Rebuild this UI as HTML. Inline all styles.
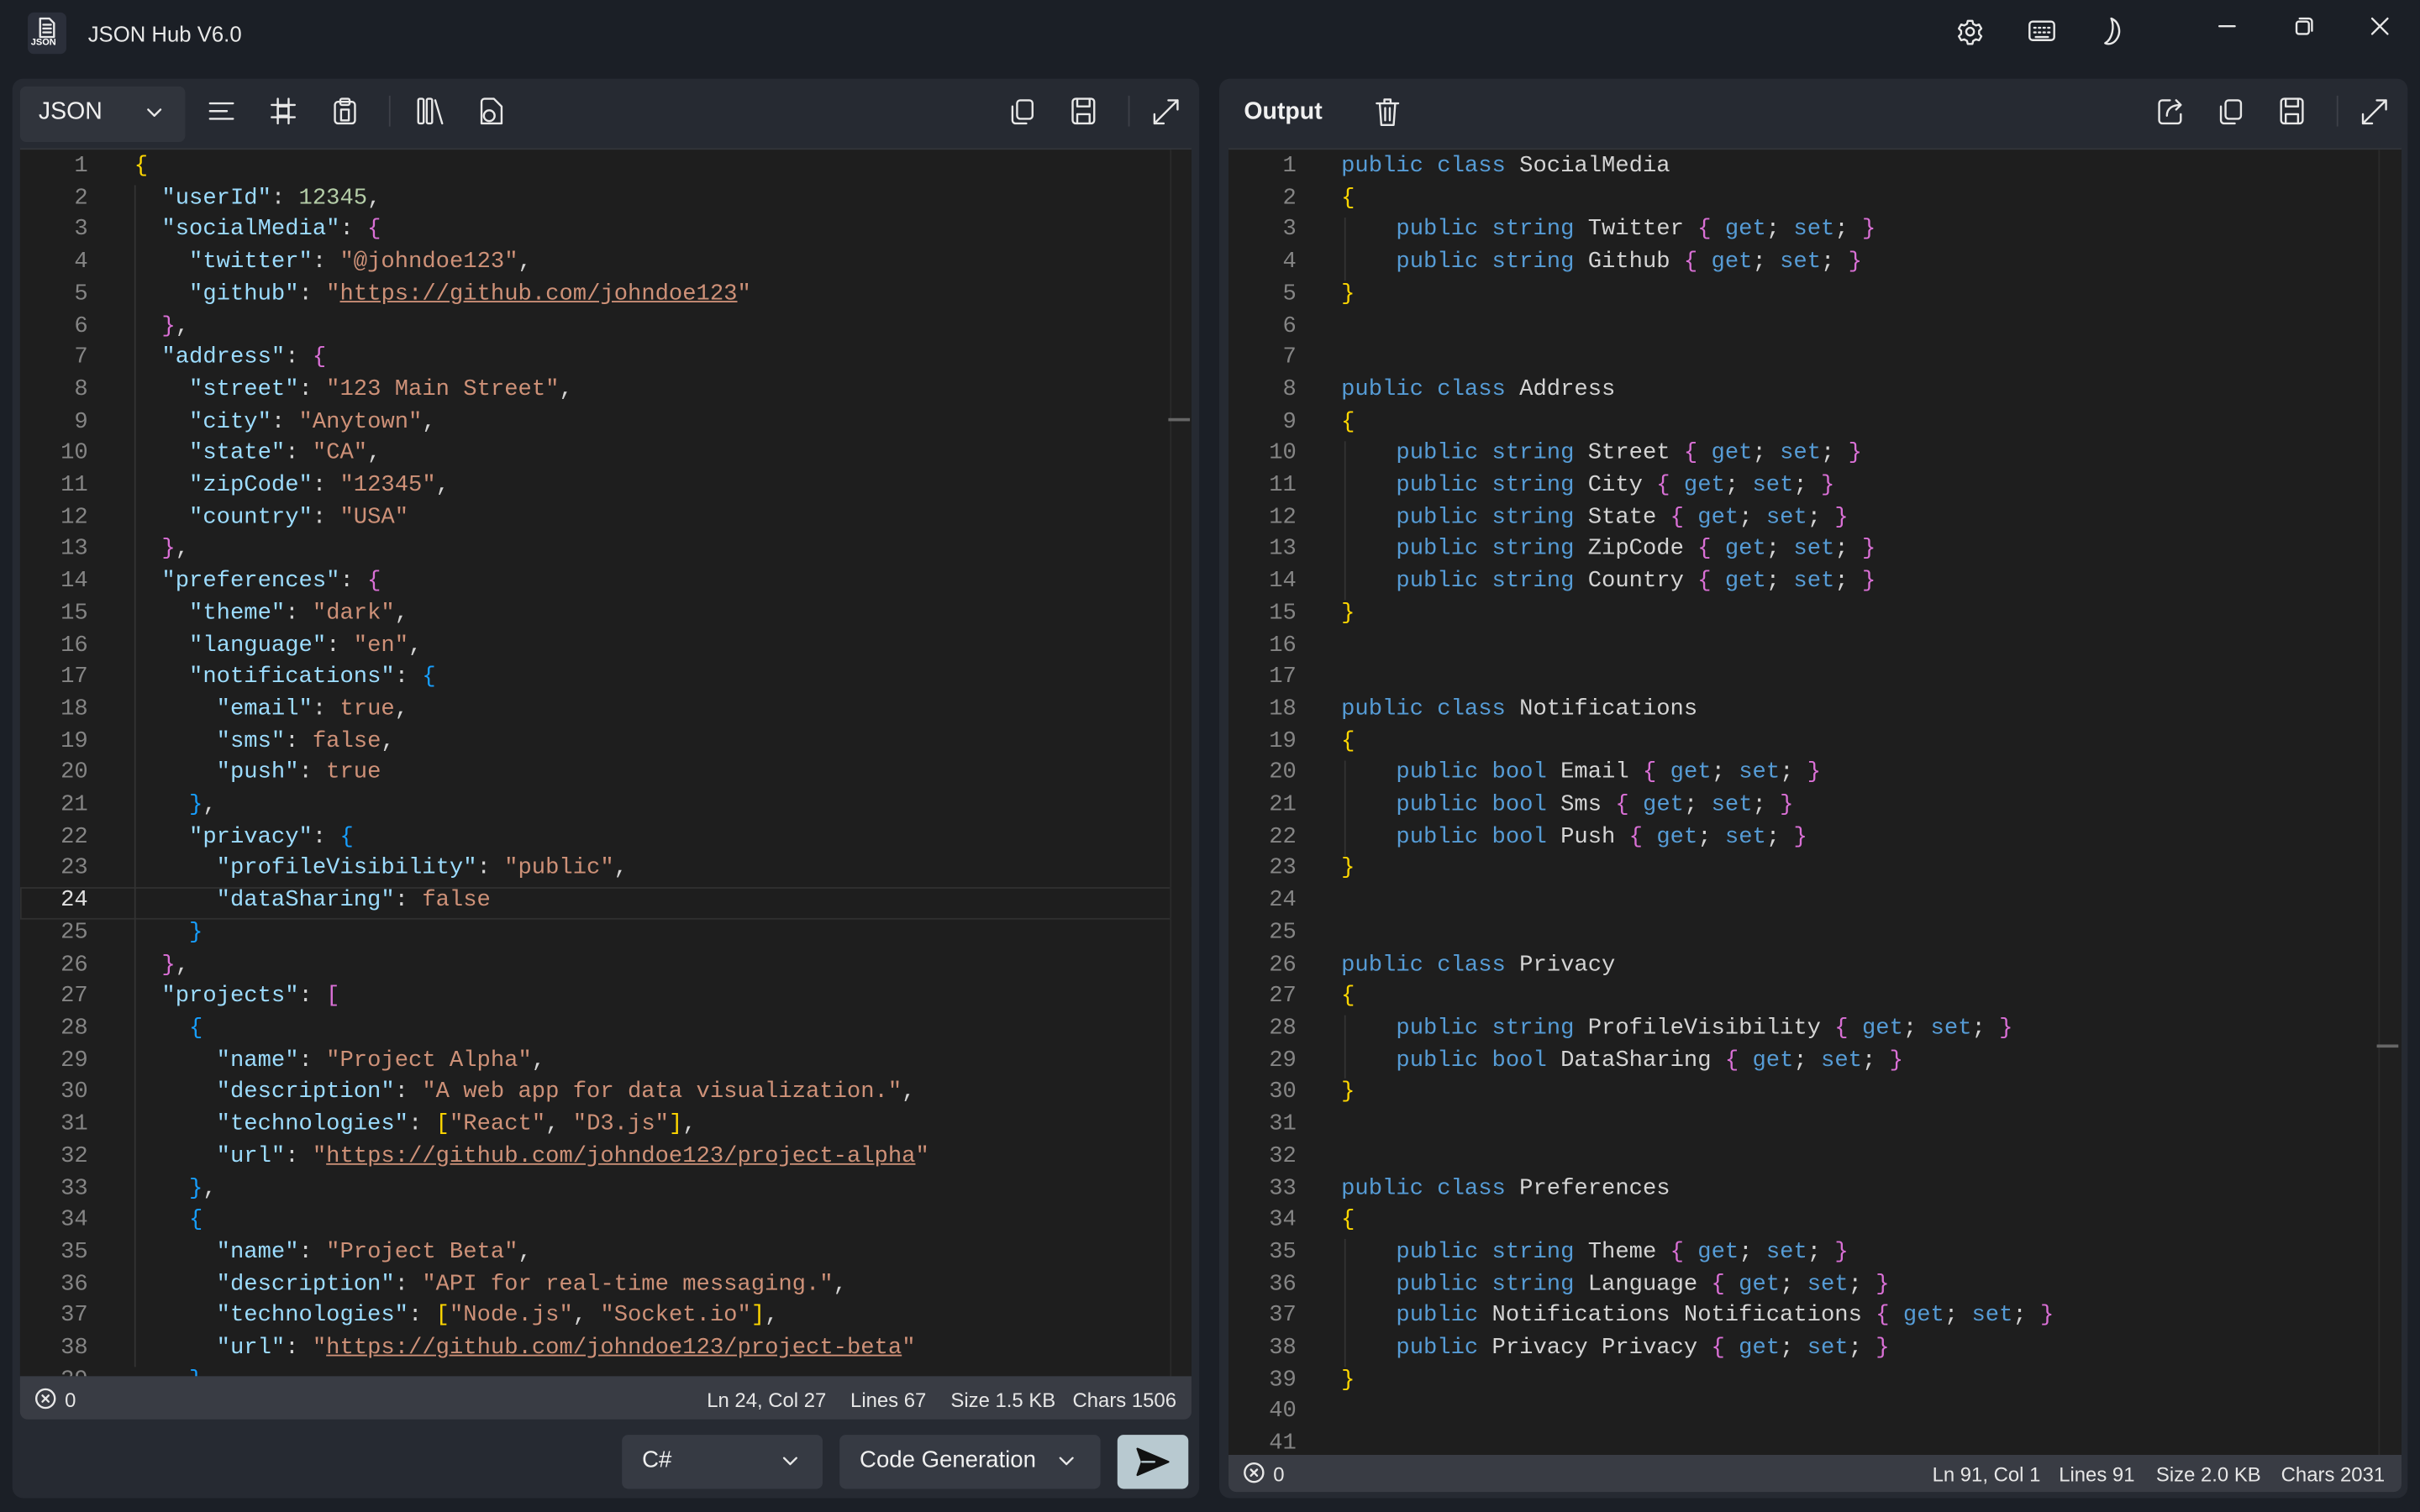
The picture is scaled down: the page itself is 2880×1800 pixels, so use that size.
<!DOCTYPE html>
<html><head><meta charset="utf-8">
<style>
*{margin:0;padding:0;box-sizing:border-box}
html,body{width:2880px;height:1800px;overflow:hidden;background:#1b1f26}
#app{position:absolute;left:0;top:0;width:1568px;height:980px;transform:scale(1.83673);transform-origin:0 0;background:#1b1f26;font-family:"Liberation Sans",sans-serif;color:#e6e6e6}
.abs{position:absolute}
.panel{position:absolute;background:#262a32;border-radius:7px}
.ed{position:absolute;background:#1e1e1e;overflow:hidden;border-top:1px solid #33363c}
.code{position:absolute;top:1px;font-family:"Liberation Mono",monospace;font-size:14.8px;line-height:20.7px;white-space:pre;color:#d4d4d4}
.ln{position:absolute;top:1px;font-family:"Liberation Mono",monospace;font-size:14.8px;line-height:20.7px;text-align:right;color:#858585;white-space:pre}
.k{color:#9cdcfe}.s{color:#ce9178}.n{color:#b5cea8}.u{color:#ce9178;text-decoration:underline}
.y{color:#ffd700}.p{color:#da70d6}.b{color:#179fff}
.kw{color:#569cd6}
.status{position:absolute;background:#393c44;font-size:13px;color:#e6e6e6}
.btn{position:absolute;background:#363a43;border-radius:4px;font-size:15px;color:#f0f0f0}
svg{position:absolute;overflow:visible}
svg *{fill:none;stroke:#e8e8e8;stroke-width:1.3;stroke-linecap:round;stroke-linejoin:round}
</style></head><body><div id="app">

<!-- title bar -->
<div class="abs" style="left:18px;top:8px;width:25px;height:27px;background:#2b2f3a;border-radius:4px"></div>
<svg style="left:24px;top:11px" width="14" height="14" viewBox="0 0 14 14"><path d="M2 1h6l3 3v9H2z M4 5h5 M4 7.5h5 M4 10h5" stroke-width="1"/></svg>
<div class="abs" style="left:20px;top:25px;font-size:6px;font-weight:bold;color:#fff">JSON</div>
<div class="abs" style="left:57px;top:14px;font-size:14px;color:#e8e8e8">JSON Hub V6.0</div>
<svg style="left:1268px;top:12px" width="17" height="17" viewBox="0 0 17 17"><circle cx="8.5" cy="8.5" r="2.5"/><path d="M7 1.5h3l.5 2 1.8 1 2-.6 1.5 2.6-1.5 1.5v2l1.5 1.5-1.5 2.6-2-.6-1.8 1-.5 2H7l-.5-2-1.8-1-2 .6-1.5-2.6 1.5-1.5v-2L1.2 6.5l1.5-2.6 2 .6 1.8-1z"/></svg>
<svg style="left:1314px;top:13px" width="18" height="15" viewBox="0 0 18 15"><rect x="1" y="1" width="16" height="12" rx="2"/><path d="M4 5h1M7 5h1M10 5h1M13 5h1M4 8h1M7 8h1M10 8h1M13 8h1M5 11h8"/></svg>
<svg style="left:1362px;top:11px" width="16" height="19" viewBox="0 0 16 19"><path d="M6 1c5 2 7 9 3 14-2 2.5-5 3-7 2 5-3 6-11 4-16z"/></svg>
<svg style="left:1437px;top:16px" width="12" height="2" viewBox="0 0 12 2"><path d="M1 1h10"/></svg>
<svg style="left:1487px;top:11px" width="12" height="12" viewBox="0 0 12 12"><rect x="1" y="3" width="8" height="8" rx="1.5"/><path d="M3 1h6a2 2 0 0 1 2 2v6"/></svg>
<svg style="left:1536px;top:11px" width="12" height="12" viewBox="0 0 12 12"><path d="M1 1l10 10M11 1L1 11"/></svg>

<!-- LEFT PANEL -->
<div class="panel" style="left:8px;top:51px;width:769px;height:920px"></div>
<div class="btn" style="left:13px;top:56px;width:107px;height:36px;background:#30343c"><span class="abs" style="left:12px;top:8px;font-size:15.5px">JSON</span>
<svg style="left:82px;top:14px" width="10" height="6" viewBox="0 0 10 6"><path d="M1 1l4 4 4-4"/></svg></div>
<svg style="left:135px;top:65px" width="17" height="14" viewBox="0 0 17 14"><path d="M1 2h15M1 7h11M1 12h15"/></svg>
<svg style="left:175px;top:63px" width="17" height="18" viewBox="0 0 17 18"><path d="M5 1v16M12 1v16M1 5h15M1 13h15"/><rect x="5" y="6" width="7" height="6"/></svg>
<svg style="left:216px;top:63px" width="15" height="18" viewBox="0 0 15 18"><rect x="1" y="3" width="13" height="14" rx="2"/><rect x="4.5" y="1" width="6" height="4" rx="1"/><path d="M5 8h5v7H5z"/></svg>
<div class="abs" style="left:252px;top:62px;width:1px;height:20px;background:#3d4048"></div>
<svg style="left:270px;top:63px" width="18" height="18" viewBox="0 0 18 18"><rect x="1" y="1" width="3.5" height="16" rx="1"/><rect x="6.5" y="1" width="3.5" height="16" rx="1"/><path d="M12 2l4.5 15"/></svg>
<svg style="left:310px;top:63px" width="16" height="18" viewBox="0 0 16 18"><path d="M2 17V3a2 2 0 0 1 2-2h6l5 5v11z"/><circle cx="7" cy="12" r="3.5" fill="#e8e8e8"/></svg>
<svg style="left:654px;top:64px" width="16" height="17" viewBox="0 0 16 17"><rect x="5" y="1" width="10" height="12" rx="2"/><path d="M2 5v9a2 2 0 0 0 2 2h7"/></svg>
<svg style="left:694px;top:63px" width="16" height="18" viewBox="0 0 16 18"><rect x="1" y="1" width="14" height="16" rx="2"/><path d="M4 1v5h8V1M4 17v-6h8v6"/></svg>
<div class="abs" style="left:731px;top:62px;width:1px;height:20px;background:#3d4048"></div>
<svg style="left:747px;top:64px" width="17" height="17" viewBox="0 0 17 17"><path d="M10 1h6v6M16 1L1 16M1 10v6h6"/></svg>

<div class="ed" style="left:13px;top:96px;width:759px;height:796px">
<div class="abs" style="left:0;top:478px;width:759px;height:21px;border:1px solid #303030"></div>
<div class="abs" style="left:745px;top:0;width:14px;height:796px;background:#1f1f1f;border-left:1px solid #2a2a2a"></div>
<div class="abs" style="left:744px;top:174px;width:14px;height:2px;background:#666"></div>
<div class="abs" style="left:74px;top:23px;width:1px;height:766px;background:#333"></div>
<div class="ln" style="left:0;width:44px">1
2
3
4
5
6
7
8
9
10
11
12
13
14
15
16
17
18
19
20
21
22
23
<span style="color:#e0e0e0">24</span>
25
26
27
28
29
30
31
32
33
34
35
36
37
38
39</div>
<div class="code" style="left:74px"><span class="y">{</span>
  <span class="k">"userId"</span>: <span class="n">12345</span>,
  <span class="k">"socialMedia"</span>: <span class="p">{</span>
    <span class="k">"twitter"</span>: <span class="s">"@johndoe123"</span>,
    <span class="k">"github"</span>: <span class="s">"<span class="u">https://github.com/johndoe123</span>"</span>
  <span class="p">}</span>,
  <span class="k">"address"</span>: <span class="p">{</span>
    <span class="k">"street"</span>: <span class="s">"123 Main Street"</span>,
    <span class="k">"city"</span>: <span class="s">"Anytown"</span>,
    <span class="k">"state"</span>: <span class="s">"CA"</span>,
    <span class="k">"zipCode"</span>: <span class="s">"12345"</span>,
    <span class="k">"country"</span>: <span class="s">"USA"</span>
  <span class="p">}</span>,
  <span class="k">"preferences"</span>: <span class="p">{</span>
    <span class="k">"theme"</span>: <span class="s">"dark"</span>,
    <span class="k">"language"</span>: <span class="s">"en"</span>,
    <span class="k">"notifications"</span>: <span class="b">{</span>
      <span class="k">"email"</span>: <span class="s">true</span>,
      <span class="k">"sms"</span>: <span class="s">false</span>,
      <span class="k">"push"</span>: <span class="s">true</span>
    <span class="b">}</span>,
    <span class="k">"privacy"</span>: <span class="b">{</span>
      <span class="k">"profileVisibility"</span>: <span class="s">"public"</span>,
      <span class="k">"dataSharing"</span>: <span class="s">false</span>
    <span class="b">}</span>
  <span class="p">}</span>,
  <span class="k">"projects"</span>: <span class="p">[</span>
    <span class="b">{</span>
      <span class="k">"name"</span>: <span class="s">"Project Alpha"</span>,
      <span class="k">"description"</span>: <span class="s">"A web app for data visualization."</span>,
      <span class="k">"technologies"</span>: <span class="y">[</span><span class="s">"React"</span>, <span class="s">"D3.js"</span><span class="y">]</span>,
      <span class="k">"url"</span>: <span class="s">"<span class="u">https://github.com/johndoe123/project-alpha</span>"</span>
    <span class="b">}</span>,
    <span class="b">{</span>
      <span class="k">"name"</span>: <span class="s">"Project Beta"</span>,
      <span class="k">"description"</span>: <span class="s">"API for real-time messaging."</span>,
      <span class="k">"technologies"</span>: <span class="y">[</span><span class="s">"Node.js"</span>, <span class="s">"Socket.io"</span><span class="y">]</span>,
      <span class="k">"url"</span>: <span class="s">"<span class="u">https://github.com/johndoe123/project-beta</span>"</span>
    <span class="b">}</span></div>
</div>
<div class="status" style="left:13px;top:892px;width:759px;height:28px;border-radius:0 0 5px 5px">
<svg style="left:10px;top:8px" width="13" height="13" viewBox="0 0 13 13"><circle cx="6.5" cy="6.5" r="6"/><path d="M4.5 4.5l4 4M8.5 4.5l-4 4"/></svg>
<span class="abs" style="left:29px;top:8px">0</span>
<span class="abs" style="left:445px;top:8px">Ln 24, Col 27</span>
<span class="abs" style="left:538px;top:8px">Lines 67</span>
<span class="abs" style="left:603px;top:8px">Size 1.5 KB</span>
<span class="abs" style="left:682px;top:8px">Chars 1506</span>
</div>
<div class="btn" style="left:403px;top:930px;width:130px;height:35px"><span class="abs" style="left:13px;top:8px">C#</span>
<svg style="left:104px;top:14px" width="10" height="6" viewBox="0 0 10 6"><path d="M1 1l4 4 4-4"/></svg></div>
<div class="btn" style="left:544px;top:930px;width:169px;height:35px"><span class="abs" style="left:13px;top:8px">Code Generation</span>
<svg style="left:142px;top:14px" width="10" height="6" viewBox="0 0 10 6"><path d="M1 1l4 4 4-4"/></svg></div>
<div class="btn" style="left:724px;top:930px;width:46px;height:35px;background:#b8c9d0">
<svg style="left:12px;top:8px" width="22" height="19" viewBox="0 0 22 19"><path d="M1 1l20 8.5L1 18l3-8.5z" style="fill:#111;stroke:#111"/><path d="M4 9.5h8" style="stroke:#b8c9d0"/></svg></div>

<!-- RIGHT PANEL -->
<div class="panel" style="left:790px;top:51px;width:770px;height:920px"></div>
<div class="abs" style="left:806px;top:64px;font-size:15.5px;font-weight:bold;color:#f0f0f0">Output</div>
<svg style="left:891px;top:63px" width="16" height="19" viewBox="0 0 16 19"><path d="M1 4h14M6 4V1.5h4V4M3 4l1 14h8l1-14M6.5 7v8M9.5 7v8"/></svg>
<svg style="left:1398px;top:63px" width="17" height="18" viewBox="0 0 17 18"><path d="M8 2H3a2 2 0 0 0-2 2v11a2 2 0 0 0 2 2h10a2 2 0 0 0 2-2v-4"/><path d="M6 12c0-5 4-7 9-7M12 2l3 3-3 3"/></svg>
<svg style="left:1437px;top:64px" width="16" height="17" viewBox="0 0 16 17"><rect x="5" y="1" width="10" height="12" rx="2"/><path d="M2 5v9a2 2 0 0 0 2 2h7"/></svg>
<svg style="left:1477px;top:63px" width="16" height="18" viewBox="0 0 16 18"><rect x="1" y="1" width="14" height="16" rx="2"/><path d="M4 1v5h8V1M4 17v-6h8v6"/></svg>
<div class="abs" style="left:1514px;top:62px;width:1px;height:20px;background:#3d4048"></div>
<svg style="left:1530px;top:64px" width="17" height="17" viewBox="0 0 17 17"><path d="M10 1h6v6M16 1L1 16M1 10v6h6"/></svg>

<div class="ed" style="left:796px;top:96px;width:760px;height:847px">
<div class="abs" style="left:745px;top:0;width:15px;height:847px;background:#1f1f1f;border-left:1px solid #2a2a2a"></div>
<div class="abs" style="left:744px;top:580px;width:14px;height:2px;background:#666"></div>
<div class="abs" style="left:75px;top:44px;width:1px;height:41px;background:#333"></div>
<div class="abs" style="left:75px;top:189px;width:1px;height:103px;background:#333"></div>
<div class="abs" style="left:75px;top:396px;width:1px;height:62px;background:#333"></div>
<div class="abs" style="left:75px;top:561px;width:1px;height:41px;background:#333"></div>
<div class="abs" style="left:75px;top:706px;width:1px;height:83px;background:#333"></div>
<div class="ln" style="left:0;width:44px">1
2
3
4
5
6
7
8
9
10
11
12
13
14
15
16
17
18
19
20
21
22
23
24
25
26
27
28
29
30
31
32
33
34
35
36
37
38
39
40
41</div>
<div class="code" style="left:73px"><span class="kw">public class</span> SocialMedia
<span class="y">{</span>
    <span class="kw">public string</span> Twitter <span class="p">{</span> <span class="kw">get</span>; <span class="kw">set</span>; <span class="p">}</span>
    <span class="kw">public string</span> Github <span class="p">{</span> <span class="kw">get</span>; <span class="kw">set</span>; <span class="p">}</span>
<span class="y">}</span>


<span class="kw">public class</span> Address
<span class="y">{</span>
    <span class="kw">public string</span> Street <span class="p">{</span> <span class="kw">get</span>; <span class="kw">set</span>; <span class="p">}</span>
    <span class="kw">public string</span> City <span class="p">{</span> <span class="kw">get</span>; <span class="kw">set</span>; <span class="p">}</span>
    <span class="kw">public string</span> State <span class="p">{</span> <span class="kw">get</span>; <span class="kw">set</span>; <span class="p">}</span>
    <span class="kw">public string</span> ZipCode <span class="p">{</span> <span class="kw">get</span>; <span class="kw">set</span>; <span class="p">}</span>
    <span class="kw">public string</span> Country <span class="p">{</span> <span class="kw">get</span>; <span class="kw">set</span>; <span class="p">}</span>
<span class="y">}</span>


<span class="kw">public class</span> Notifications
<span class="y">{</span>
    <span class="kw">public bool</span> Email <span class="p">{</span> <span class="kw">get</span>; <span class="kw">set</span>; <span class="p">}</span>
    <span class="kw">public bool</span> Sms <span class="p">{</span> <span class="kw">get</span>; <span class="kw">set</span>; <span class="p">}</span>
    <span class="kw">public bool</span> Push <span class="p">{</span> <span class="kw">get</span>; <span class="kw">set</span>; <span class="p">}</span>
<span class="y">}</span>


<span class="kw">public class</span> Privacy
<span class="y">{</span>
    <span class="kw">public string</span> ProfileVisibility <span class="p">{</span> <span class="kw">get</span>; <span class="kw">set</span>; <span class="p">}</span>
    <span class="kw">public bool</span> DataSharing <span class="p">{</span> <span class="kw">get</span>; <span class="kw">set</span>; <span class="p">}</span>
<span class="y">}</span>


<span class="kw">public class</span> Preferences
<span class="y">{</span>
    <span class="kw">public string</span> Theme <span class="p">{</span> <span class="kw">get</span>; <span class="kw">set</span>; <span class="p">}</span>
    <span class="kw">public string</span> Language <span class="p">{</span> <span class="kw">get</span>; <span class="kw">set</span>; <span class="p">}</span>
    <span class="kw">public</span> Notifications Notifications <span class="p">{</span> <span class="kw">get</span>; <span class="kw">set</span>; <span class="p">}</span>
    <span class="kw">public</span> Privacy Privacy <span class="p">{</span> <span class="kw">get</span>; <span class="kw">set</span>; <span class="p">}</span>
<span class="y">}</span>

</div>
</div>
<div class="status" style="left:796px;top:943px;width:760px;height:24px;border-radius:0 0 5px 5px">
<svg style="left:10px;top:5px" width="13" height="13" viewBox="0 0 13 13"><circle cx="6.5" cy="6.5" r="6"/><path d="M4.5 4.5l4 4M8.5 4.5l-4 4"/></svg>
<span class="abs" style="left:29px;top:5px">0</span>
<span class="abs" style="left:456px;top:5px">Ln 91, Col 1</span>
<span class="abs" style="left:538px;top:5px">Lines 91</span>
<span class="abs" style="left:601px;top:5px">Size 2.0 KB</span>
<span class="abs" style="left:682px;top:5px">Chars 2031</span>
</div>

</div></body></html>
